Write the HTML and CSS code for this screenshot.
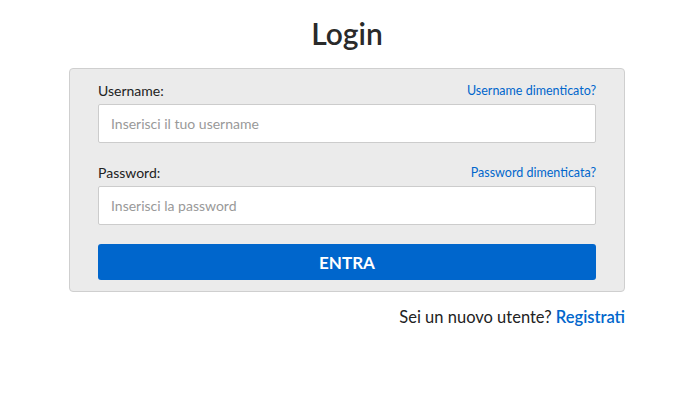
FILE: index.html
```html
<!DOCTYPE html>
<html lang="it">
<head>
  <meta charset="UTF-8" />
  <meta name="viewport" content="width=device-width, initial-scale=1.0" />
  <title>Login</title>
  <link rel="stylesheet" href="styles.css">
</head>
<body>

  <div class="wrapper">
    <h1>Login</h1>

    <!-- Login form -->
    <form class="login-box" onsubmit="return false">
      <div class="field-head">
        <label for="username">Username:</label>
        <a href="#">Username dimenticato?</a>
      </div>
      <input type="text" id="username" placeholder="Inserisci il tuo username">

      <div class="field-head second">
        <label for="password">Password:</label>
        <a href="#">Password dimenticata?</a>
      </div>
      <input type="password" id="password" placeholder="Inserisci la password">

      <button type="submit">ENTRA</button>
    </form>

    <p class="register">Sei un nuovo utente? <a href="#">Registrati</a></p>
  </div>

</body>
</html>
```

FILE: styles.css
```css
body {
  margin: 0;
  padding-right: 6px;
  font-family: 'Lato', 'Open Sans', sans-serif;
  background: #fff;
  color: #222;
}

.wrapper {
  width: 556px;
  margin: 0 auto;
}

h1 {
  margin: 15px 0 0;
  font-size: 30px;
  line-height: 36px;
  font-weight: 600;
  text-align: center;
  color: #2a2a2a;
}

.login-box {
  margin-top: 17px;
  padding: 11px 28px 11px;
  background: #ebebeb;
  border: 1px solid #cfcfcf;
  border-radius: 4px;
}

.field-head {
  display: flex;
  justify-content: space-between;
  align-items: center;
  height: 20px;
}

.field-head.second {
  margin-top: 19px;
}

.field-head label {
  font-size: 14px;
  color: #222;
}

.field-head a {
  font-size: 12.5px;
  color: #0066cc;
  text-decoration: none;
}

input {
  display: block;
  box-sizing: border-box;
  width: 100%;
  height: 39px;
  margin-top: 4px;
  padding: 0 12px;
  background: #fff;
  border: 1px solid #ccc;
  border-radius: 2px;
  font-family: inherit;
  font-size: 14px;
  color: #333;
}

input::placeholder {
  color: #999;
}

button {
  display: block;
  width: 100%;
  height: 36px;
  margin-top: 19px;
  background-color: #0066cc;
  color: white;
  border: none;
  border-radius: 3px;
  font-family: inherit;
  font-size: 17px;
  font-weight: 700;
  cursor: pointer;
}

button:hover {
  background-color: #0059b3;
}

.register {
  margin: 14px 0 0;
  line-height: 22px;
  font-size: 16.5px;
  text-align: right;
  color: #222;
}

.register a {
  color: #0066cc;
  font-weight: 600;
  text-decoration: none;
}
```
